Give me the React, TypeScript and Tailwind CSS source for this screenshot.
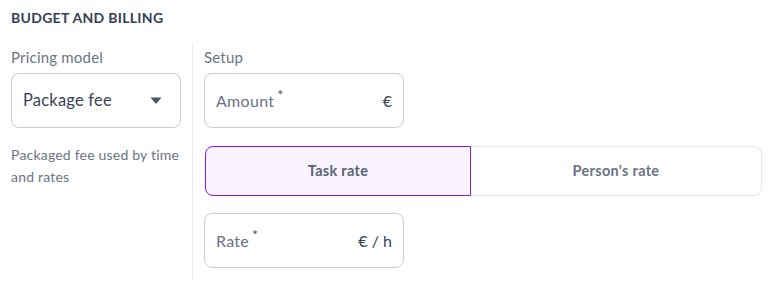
import { ReactNode } from 'react'

// Text input with a required marker and a unit on the right
function UnitField({ label, unit }: { label: string; unit: string }) {
  return (
    <div className="flex h-[55px] w-[200px] items-center justify-between rounded-lg border border-[#c9ccd2] px-[11px]">
      <span className="text-[16px] tracking-[0.3px] text-[#6b7385]">
        {label}
        <sup className="ml-[3px] text-[14px] text-[#4b5565]">*</sup>
      </span>
      <span className="text-[16px] text-[#3a4354]">{unit}</span>
    </div>
  )
}

function FieldLabel({ children }: { children: ReactNode }) {
  return (
    <div className="mb-[6px] text-[15px] leading-[20px] tracking-[0.2px] text-[#6b7385]">{children}</div>
  )
}

export default function App() {
  return (
    <div className="h-[296px] w-[780px] bg-white px-[11px] pt-[10px] font-['Lato',sans-serif]">
      <h2 className="text-[14px] font-bold uppercase leading-[16px] tracking-[0.3px] text-[#344054]">
        Budget and Billing
      </h2>

      <div className="mt-[17px] flex">
        {/* Pricing model */}
        <div className="mr-[11px] w-[170px] pt-[4px]">
          <FieldLabel>Pricing model</FieldLabel>
          <div className="flex h-[55px] items-center justify-between rounded-lg border border-[#c9ccd2] pl-[11px] pr-[18px]">
            <span className="text-[16.5px] tracking-[0.2px] text-[#3a4354]">Package fee</span>
            <svg width="12" height="7" viewBox="0 0 12 7">
              <path d="M0.5 0.5h11L6.9 6a1.2 1.2 0 0 1-1.8 0z" fill="#4b5563" />
            </svg>
          </div>
          <p className="mt-[16px] text-[14px] leading-[22px] tracking-[0.2px] text-[#6b7385]">
            Packaged fee used by time and rates
          </p>
        </div>

        {/* Setup */}
        <div className="flex-1 border-l border-[#e8e9ec] pb-[13px] pl-[11px] pt-[4px]">
          <FieldLabel>Setup</FieldLabel>
          <UnitField label="Amount" unit="€" />

          <div className="ml-[1px] mt-[18px] flex h-[50px] w-[557px]">
            <button className="w-[266px] rounded-l-lg border border-[#7c1aff] bg-[#f8f3ff] text-[14.5px] font-bold tracking-[0.3px] text-[#5a6475]">
              Task rate
            </button>
            <button className="flex-1 rounded-r-lg border-y border-r border-[#e5e7eb] text-[14.5px] font-bold tracking-[0.3px] text-[#6b7385]">
              Person's rate
            </button>
          </div>

          <div className="mt-[17px]">
            <UnitField label="Rate" unit="€ / h" />
          </div>
        </div>
      </div>
    </div>
  )
}
